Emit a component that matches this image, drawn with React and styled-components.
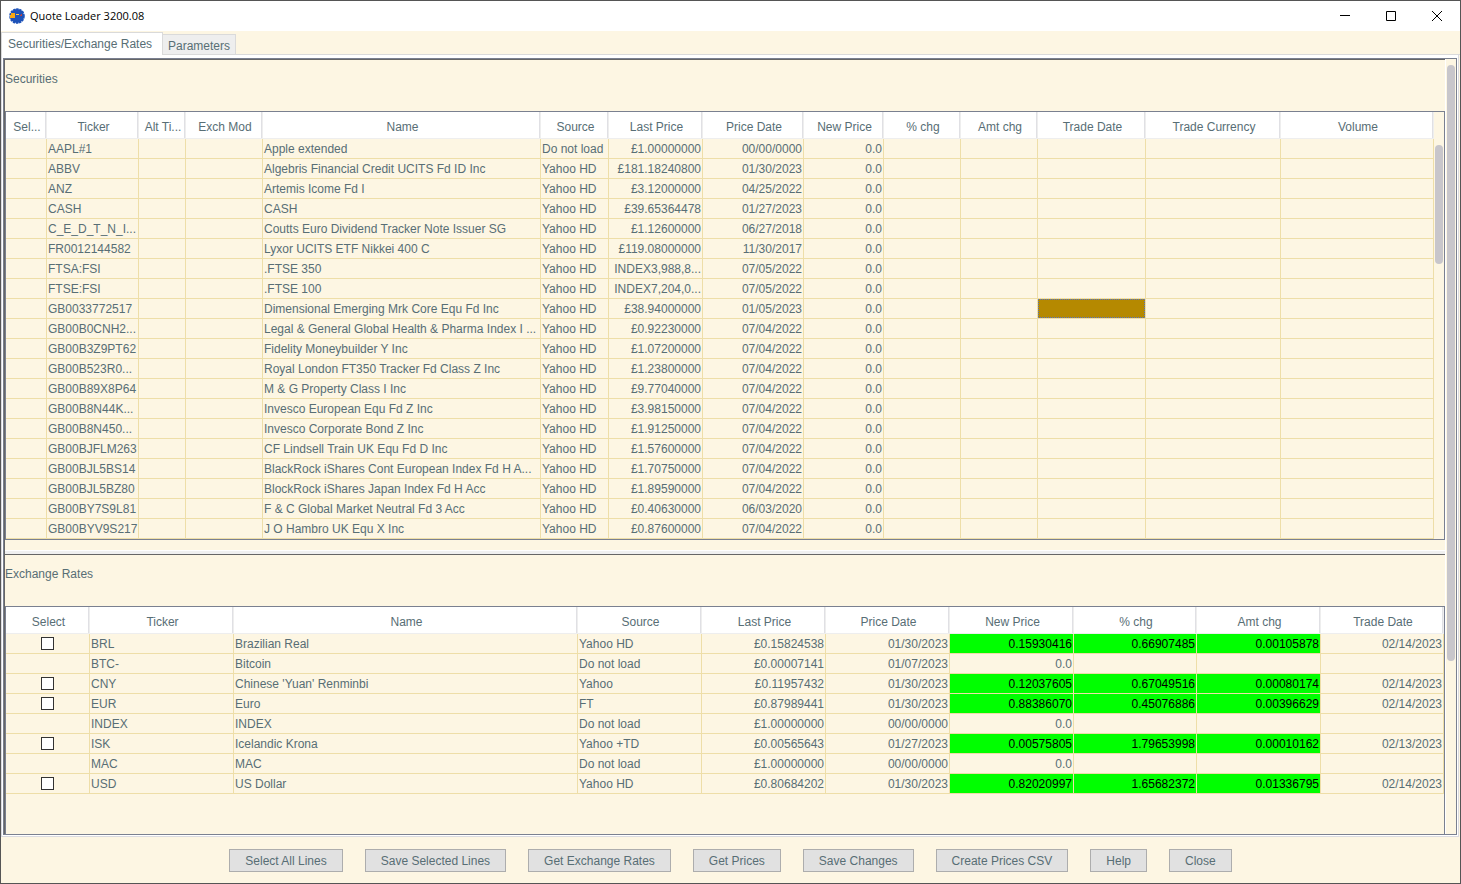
import { useState } from 'react';
import styled, { createGlobalStyle } from 'styled-components';

const GlobalStyle = createGlobalStyle`
  * {
    box-sizing: border-box;
  }

  body {
    margin: 0;
    background: #fdf6e3;
    color: #586e75;
    font-family: 'Liberation Sans', Arial, sans-serif;
    font-size: 12px;
    line-height: 16px;
  }
`;

const Window = styled.div`
  display: flex;
  flex-direction: column;
  min-height: 100vh;
  border: 1px solid #555;
  background: #fdf6e3;
`;

const TitleBar = styled.header`
  display: flex;
  align-items: center;
  height: 30px;
  padding-left: 8px;
  background: #fff;
  color: #000;

  > svg {
    flex: none;
  }
`;

const Title = styled.h1`
  flex-grow: 1;
  margin: 0 0 0 5px;
  font-family: 'Open Sans', 'Noto Sans', sans-serif;
  font-size: 11px;
  font-weight: 400;
`;

const WindowButton = styled.button`
  display: flex;
  align-items: center;
  justify-content: center;
  width: 46px;
  height: 28px;
  padding: 0;
  border: 0;
  background: transparent;
`;

const TabBar = styled.div`
  display: flex;
  align-items: flex-end;
  height: 24px;
  border-bottom: 1px solid #dadada;
`;

const Tab = styled.button`
  min-width: ${({ $active }) => ($active ? 162 : 73)}px;
  height: ${({ $active }) => ($active ? 23 : 20)}px;
  margin-bottom: ${({ $active }) => ($active ? -1 : 0)}px;
  padding: ${({ $active }) => ($active ? '0 6px' : '2px 3px 0 5px')};
  border: 1px solid #dadada;
  border-width: ${({ $active }) => ($active ? '1px 1px 0' : '1px 1px 0 0')};
  background: ${({ $active }) => ($active ? '#fff' : '#eee')};
  color: inherit;
  font: inherit;
  text-align: left;
`;

const TabPanel = styled.main`
  display: flex;
  flex-direction: column;
  flex-grow: 1;
  margin-right: 1px;
  padding: 3px 1px 1px;
  border: 1px solid #dadae0;
  border-top: 0;
  background: #fff;
`;

const ScrollPane = styled.div`
  display: flex;
  flex-grow: 1;
  border: 1px solid #7a8090;
  background: #fdf6e3;
`;

const Split = styled.div`
  display: flex;
  flex-direction: column;
  flex-grow: 1;
  min-width: 0;
  border-left: 1px solid #666;
`;

const Section = styled.section`
  display: flex;
  flex-direction: column;
  flex-grow: ${({ $grow }) => ($grow ? 1 : 0)};
  padding-bottom: ${({ $grow }) => ($grow ? 0 : 10)}px;
  border-top: 1px solid #666;
`;

const SectionTitle = styled.h2`
  height: 51px;
  margin: 0;
  padding-top: 11px;
  font-size: 12px;
  font-weight: 400;
`;

const Divider = styled.div`
  height: 4px;
  border-top: 1px solid #fff;
  background: #f0f0f0;
`;

const TablePane = styled.div`
  display: flex;
  flex-grow: 1;
  border: 1px solid #7a8090;
  border-bottom-width: ${({ $open }) => ($open ? 0 : 1)}px;
`;

const Track = styled.div`
  flex: none;
  width: ${({ $outer }) => ($outer ? 11 : 10)}px;
  padding: ${({ $outer }) => ($outer ? '6px 1px 0' : '33px 1px 0')};
  border-left: ${({ $outer }) => ($outer ? '1px solid #fff' : '0')};
`;

const Thumb = styled.div`
  width: 8px;
  height: ${({ $height }) => $height}px;
  border-radius: 4px;
  background: #c8c6cb;
`;

const Grid = styled.table`
  flex-grow: 1;
  align-self: flex-start;
  width: 100%;
  min-width: 0;
  table-layout: fixed;
  border-collapse: separate;
  border-spacing: 0;
`;

const Col = styled.col`
  width: ${({ $width }) => ($width ? `${$width}px` : 'auto')};
`;

const HeadCell = styled.th`
  height: 27px;
  padding: 3px 0 0 2px;
  border-right: 1px solid #eee;
  border-bottom: 1px solid #eee;
  background: #fff;
  box-shadow: inset -1px 0 #e0e0e4;
  font-weight: 400;
  white-space: nowrap;
  overflow: hidden;
`;

const Cell = styled.td`
  height: 20px;
  padding: 0 1px;
  border-right: 1px solid #eedea8;
  border-bottom: 1px solid #eedea8;
  background: ${({ $changed }) => ($changed ? '#0f0' : 'transparent')};
  background-clip: padding-box;
  color: ${({ $changed }) => ($changed ? '#000' : 'inherit')};
  text-align: ${({ $align }) => $align || 'left'};
  white-space: nowrap;
  overflow: hidden;
`;

const Selection = styled.div`
  height: 19px;
  margin: 0 -1px;
  border: 1px dotted #5a78c8;
  background: #b58900;
`;

const CheckBox = styled.input`
  appearance: none;
  display: block;
  width: 13px;
  height: 13px;
  margin: 0 auto;
  border: 1px solid #333;
  background: #fff;

  &:checked {
    background: #586e75;
    box-shadow: inset 0 0 0 2px #fff;
  }
`;

const Footer = styled.footer`
  display: flex;
  justify-content: center;
  gap: 22px;
  height: 46px;
  padding-top: 12px;
`;

const Button = styled.button`
  height: 23px;
  padding: 0 15px;
  border: 1px solid #adadad;
  background: #e1e1e1;
  color: inherit;
  font: inherit;
`;

const securityColumns = [
  { name: 'Sel...', width: 41 },
  { name: 'Ticker', width: 92 },
  { name: 'Alt Ti...', width: 47 },
  { name: 'Exch Mod', width: 77 },
  { name: 'Name' },
  { name: 'Source', width: 68 },
  { name: 'Last Price', width: 94, align: 'right' },
  { name: 'Price Date', width: 101, align: 'right' },
  { name: 'New Price', width: 80, align: 'right' },
  { name: '% chg', width: 77, align: 'right' },
  { name: 'Amt chg', width: 77, align: 'right' },
  { name: 'Trade Date', width: 108, align: 'right' },
  { name: 'Trade Currency', width: 135 },
  { name: 'Volume', width: 153, align: 'right' },
];

// ticker, name, source, last price, price date
const securities = [
  ['AAPL#1', 'Apple extended', 'Do not load', '£1.00000000', '00/00/0000'],
  ['ABBV', 'Algebris Financial Credit UCITS Fd ID Inc', 'Yahoo HD', '£181.18240800', '01/30/2023'],
  ['ANZ', 'Artemis Icome Fd I', 'Yahoo HD', '£3.12000000', '04/25/2022'],
  ['CASH', 'CASH', 'Yahoo HD', '£39.65364478', '01/27/2023'],
  ['C_E_D_T_N_I...', 'Coutts Euro Dividend Tracker Note Issuer SG', 'Yahoo HD', '£1.12600000', '06/27/2018'],
  ['FR0012144582', 'Lyxor UCITS ETF Nikkei 400 C', 'Yahoo HD', '£119.08000000', '11/30/2017'],
  ['FTSA:FSI', '.FTSE 350', 'Yahoo HD', 'INDEX3,988,8...', '07/05/2022'],
  ['FTSE:FSI', '.FTSE 100', 'Yahoo HD', 'INDEX7,204,0...', '07/05/2022'],
  ['GB0033772517', 'Dimensional Emerging Mrk Core Equ Fd Inc', 'Yahoo HD', '£38.94000000', '01/05/2023'],
  ['GB00B0CNH2...', 'Legal & General Global Health & Pharma Index I ...', 'Yahoo HD', '£0.92230000', '07/04/2022'],
  ['GB00B3Z9PT62', 'Fidelity Moneybuilder Y Inc', 'Yahoo HD', '£1.07200000', '07/04/2022'],
  ['GB00B523R0...', 'Royal London FT350 Tracker Fd Class Z Inc', 'Yahoo HD', '£1.23800000', '07/04/2022'],
  ['GB00B89X8P64', 'M & G Property Class I Inc', 'Yahoo HD', '£9.77040000', '07/04/2022'],
  ['GB00B8N44K...', 'Invesco European Equ Fd Z Inc', 'Yahoo HD', '£3.98150000', '07/04/2022'],
  ['GB00B8N450...', 'Invesco Corporate Bond Z Inc', 'Yahoo HD', '£1.91250000', '07/04/2022'],
  ['GB00BJFLM263', 'CF Lindsell Train UK Equ Fd D Inc', 'Yahoo HD', '£1.57600000', '07/04/2022'],
  ['GB00BJL5BS14', 'BlackRock iShares Cont European Index Fd H A...', 'Yahoo HD', '£1.70750000', '07/04/2022'],
  ['GB00BJL5BZ80', 'BlockRock iShares Japan Index Fd H Acc', 'Yahoo HD', '£1.89590000', '07/04/2022'],
  ['GB00BY7S9L81', 'F & C Global Market Neutral Fd 3 Acc', 'Yahoo HD', '£0.40630000', '06/03/2020'],
  ['GB00BYV9S217', 'J O Hambro UK Equ X Inc', 'Yahoo HD', '£0.87600000', '07/04/2022'],
];

const rateColumns = [
  { name: 'Select', width: 84 },
  { name: 'Ticker', width: 144 },
  { name: 'Name' },
  { name: 'Source', width: 124 },
  { name: 'Last Price', width: 124, align: 'right' },
  { name: 'Price Date', width: 124, align: 'right' },
  { name: 'New Price', width: 124, align: 'right' },
  { name: '% chg', width: 123, align: 'right' },
  { name: 'Amt chg', width: 124, align: 'right' },
  { name: 'Trade Date', width: 123, align: 'right' },
];

// ticker, name, source, last price, price date, new price, % chg, amt chg, trade date
const rates = [
  ['BRL', 'Brazilian Real', 'Yahoo HD', '£0.15824538', '01/30/2023', '0.15930416', '0.66907485', '0.00105878', '02/14/2023'],
  ['BTC-', 'Bitcoin', 'Do not load', '£0.00007141', '01/07/2023', '0.0', '', '', ''],
  ['CNY', "Chinese 'Yuan' Renminbi", 'Yahoo', '£0.11957432', '01/30/2023', '0.12037605', '0.67049516', '0.00080174', '02/14/2023'],
  ['EUR', 'Euro', 'FT', '£0.87989441', '01/30/2023', '0.88386070', '0.45076886', '0.00396629', '02/14/2023'],
  ['INDEX', 'INDEX', 'Do not load', '£1.00000000', '00/00/0000', '0.0', '', '', ''],
  ['ISK', 'Icelandic Krona', 'Yahoo +TD', '£0.00565643', '01/27/2023', '0.00575805', '1.79653998', '0.00010162', '02/13/2023'],
  ['MAC', 'MAC', 'Do not load', '£1.00000000', '00/00/0000', '0.0', '', '', ''],
  ['USD', 'US Dollar', 'Yahoo HD', '£0.80684202', '01/30/2023', '0.82020997', '1.65682372', '0.01336795', '02/14/2023'],
];

const actions = [
  'Select All Lines',
  'Save Selected Lines',
  'Get Exchange Rates',
  'Get Prices',
  'Save Changes',
  'Create Prices CSV',
  'Help',
  'Close',
];

const Logo = () => (
  <svg width="16" height="16" viewBox="0 0 16 16" aria-hidden="true">
    <circle cx="8" cy="8" r="7" fill="#1d52b8" />
    <circle
      cx="8"
      cy="8"
      r="7"
      fill="none"
      stroke="#1d52b8"
      strokeWidth="1.6"
      strokeDasharray="2.4 .8"
    />
    <path d="M2 5h4v5H1V7h1z" fill="#f8a810" />
    <path d="M7 6h3v1H7z" fill="#f8c850" />
    <path d="M12 6h1v2h-2V7h1z" fill="#c04040" />
  </svg>
);

const TableHead = ({ columns }) => (
  <>
    <colgroup>
      {columns.map(({ name, width }) => (
        <Col key={name} $width={width} />
      ))}
    </colgroup>
    <thead>
      <tr>
        {columns.map(({ name }) => (
          <HeadCell key={name} scope="col">
            {name}
          </HeadCell>
        ))}
      </tr>
    </thead>
  </>
);

const SecuritiesTable = () => (
  <Grid aria-label="Securities">
    <TableHead columns={securityColumns} />
    <tbody>
      {securities.map(([ticker, name, source, price, date]) => {
        const values = ['', ticker, '', '', name, source, price, date, '0.0', '', '', '', '', ''];

        return (
          <tr key={ticker}>
            {values.map((value, i) => {
              const column = securityColumns[i];
              const isSelected = ticker === 'GB0033772517' && column.name === 'Trade Date';

              return (
                <Cell key={column.name} $align={column.align}>
                  {isSelected ? <Selection /> : value}
                </Cell>
              );
            })}
          </tr>
        );
      })}
    </tbody>
  </Grid>
);

const RatesTable = () => {
  const [checked, setChecked] = useState([]);

  const handleCheck = (ticker) => {
    setChecked(
      checked.includes(ticker)
        ? checked.filter((item) => item !== ticker)
        : [...checked, ticker]
    );
  };

  return (
    <Grid aria-label="Exchange Rates">
      <TableHead columns={rateColumns} />
      <tbody>
        {rates.map((rate) => {
          const ticker = rate[0];
          const hasChange = rate[6] !== '';

          return (
            <tr key={ticker}>
              <Cell $align="center">
                {hasChange && (
                  <CheckBox
                    type="checkbox"
                    aria-label={`Select ${ticker}`}
                    checked={checked.includes(ticker)}
                    onChange={() => handleCheck(ticker)}
                  />
                )}
              </Cell>
              {rate.map((value, i) => (
                <Cell
                  key={rateColumns[i + 1].name}
                  $align={rateColumns[i + 1].align}
                  $changed={hasChange && i >= 5 && i <= 7}
                >
                  {value}
                </Cell>
              ))}
            </tr>
          );
        })}
      </tbody>
    </Grid>
  );
};

const App = () => {
  return (
    <>
      <GlobalStyle />
      <Window>
        <TitleBar>
          <Logo />
          <Title>Quote Loader 3200.08</Title>
          <WindowButton aria-label="Minimize">
            <svg width="10" height="10" viewBox="0 0 10 10">
              <path d="M0 4.5h10" stroke="#000" />
            </svg>
          </WindowButton>
          <WindowButton aria-label="Maximize">
            <svg width="10" height="10" viewBox="0 0 10 10">
              <path d="M.5.5h9v9h-9z" fill="none" stroke="#000" />
            </svg>
          </WindowButton>
          <WindowButton aria-label="Close window">
            <svg width="10" height="10" viewBox="0 0 10 10">
              <path d="M0 0l10 10M10 0L0 10" stroke="#000" />
            </svg>
          </WindowButton>
        </TitleBar>

        <TabBar role="tablist">
          <Tab role="tab" aria-selected="true" $active>
            Securities/Exchange Rates
          </Tab>
          <Tab role="tab" aria-selected="false">
            Parameters
          </Tab>
        </TabBar>

        <TabPanel>
          <ScrollPane>
            <Split>
              <Section>
                <SectionTitle>Securities</SectionTitle>
                <TablePane>
                  <SecuritiesTable />
                  <Track>
                    <Thumb $height={119} />
                  </Track>
                </TablePane>
              </Section>
              <Divider />
              <Section $grow>
                <SectionTitle>Exchange Rates</SectionTitle>
                <TablePane $open>
                  <RatesTable />
                </TablePane>
              </Section>
            </Split>
            <Track $outer>
              <Thumb $height={596} />
            </Track>
          </ScrollPane>
        </TabPanel>

        <Footer>
          {actions.map((action) => (
            <Button key={action}>{action}</Button>
          ))}
        </Footer>
      </Window>
    </>
  );
};

export default App;
